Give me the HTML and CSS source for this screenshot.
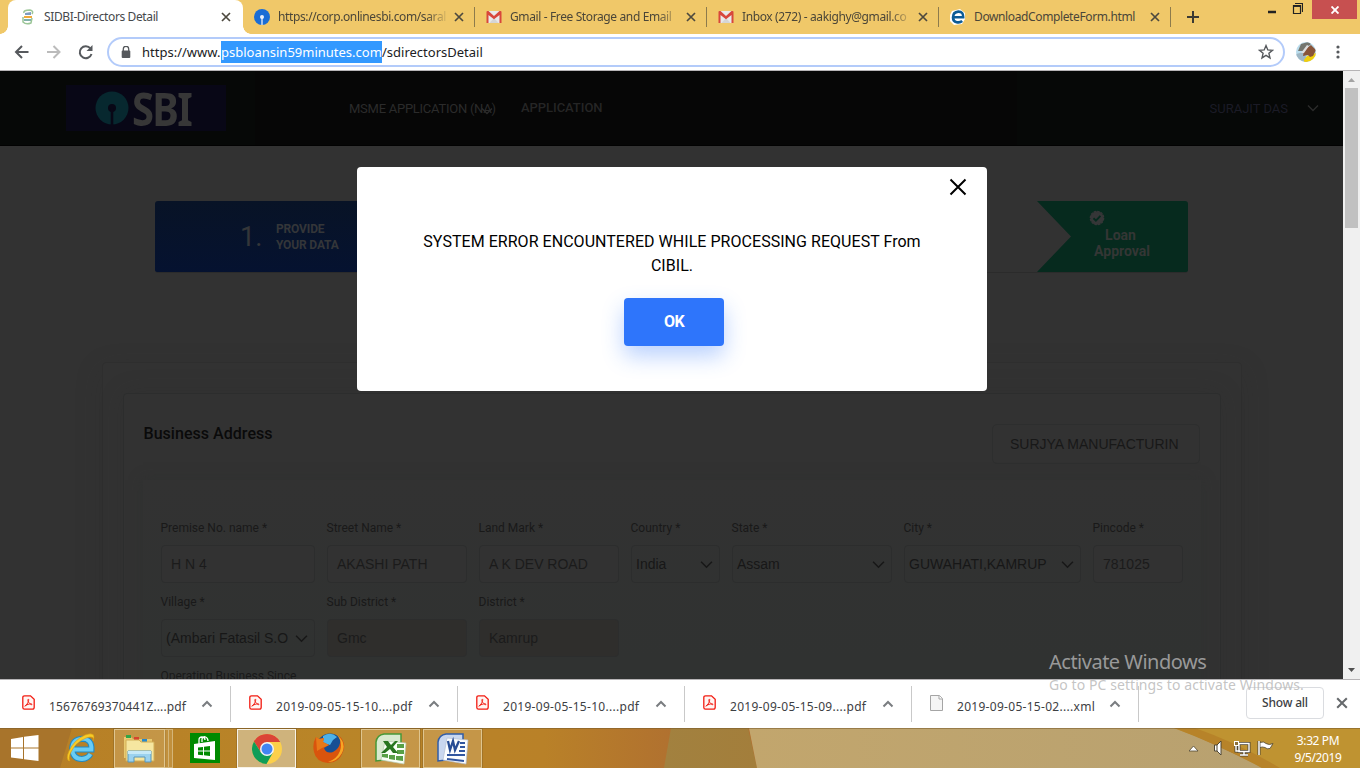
FILE: index.html
```html
<!DOCTYPE html>
<html lang="en">
<head>
<meta charset="utf-8">
<title>SIDBI-Directors Detail</title>
<link rel="stylesheet" href="styles.css">
</head>
<body>
<svg class="defs" width="0" height="0">
  <defs>
    <symbol id="close" viewBox="0 0 10 10"><path d="M1 1l8 8M9 1l-8 8" fill="none" stroke="currentColor" stroke-width="1.7"/></symbol>
    <symbol id="up" viewBox="0 0 12 8"><path d="M1.5 6.5L6 2l4.500 4.500" fill="none" stroke="#7a7d80" stroke-width="2"/></symbol>
    <symbol id="down" viewBox="0 0 12 8"><path d="M1 1.500l5 5 5-5" fill="none" stroke="currentColor" stroke-width="1.400"/></symbol>
    <symbol id="gmail" viewBox="0 0 15 12"><path d="M1 0h13v12H1z" fill="#e9e9e9"/><path d="M3 12l4.500-5 4.500 5z" fill="#d5d5d5"/><path d="M0 1Q0 0 1 0h1l5.500 5L13 0h1q1 0 1 1v11h-2V4l-5.500 4.200L2 4v8H0z" fill="#d8473b"/></symbol>
    <symbol id="pdf" viewBox="0 0 13 15"><path d="M2.500 .8h6l3.700 3.500v8q0 1.900-1.800 1.900H2.500Q.8 14.200 .8 12.500v-10Q.8 .8 2.500 .8z" fill="#fff5f3" stroke="#f21c12" stroke-width="1.300"/><path d="M3 11.300c-1.200-.8 6.800-3.600 7-1.900.1 1.500-5-2.400-4-4.900 1.200-1.800 1.200 3.200-3 6.800z" fill="none" stroke="#f21c12"/></symbol>
  </defs>
</svg>
<div class="screen">
  <div class="tabstrip">
    <div class="tab active">
      <svg class="fav" width="16" height="16" viewBox="0 0 16 16"><path d="M4 4Q3 1 10 1q4 1 2 4M3 8v5q3 3 8 1l1-5" fill="none" stroke="#9bc596" stroke-width="1.500"/><path d="M5 4l6-1v3H5z" fill="#7f9dc0"/><path d="M4 7h8v2H4z" fill="#f0a93a"/><path d="M4 10h7v2H4z" fill="#80b0a8"/></svg>
      <span class="tab-title">SIDBI-Directors Detail</span><svg class="x" width="10" height="10"><use href="#close"/></svg>
    </div>
    <div class="tab sep">
      <svg class="fav" width="16" height="16" viewBox="0 0 16 16"><circle cx="8" cy="8" r="8" fill="#1a6dd5"/><circle cx="8" cy="8" r="2" fill="#e8f0fb"/><path d="M8 8v8" stroke="#e8f0fb" stroke-width="1.300"/></svg>
      <span class="tab-title fade">https://corp.onlinesbi.com/saral</span><svg class="x" width="10" height="10"><use href="#close"/></svg>
    </div>
    <div class="tab sep">
      <svg class="fav" width="16" height="12"><use href="#gmail"/></svg>
      <span class="tab-title fade">Gmail - Free Storage and Email</span><svg class="x" width="10" height="10"><use href="#close"/></svg>
    </div>
    <div class="tab sep">
      <svg class="fav" width="16" height="12"><use href="#gmail"/></svg>
      <span class="tab-title fade">Inbox (272) - aakighy@gmail.co</span><svg class="x" width="10" height="10"><use href="#close"/></svg>
    </div>
    <div class="tab sep">
      <svg class="fav" width="16" height="16" viewBox="0 0 16 16"><path d="M2 2l8-2 5 4v6l-3 5-8 1-4-4V6z" fill="#fff"/><path d="M3 8.300h10.200Q13.500 2.500 8.300 2.600 3 3 3 8.500c0 5.500 6.500 5.800 9.200 3.500" fill="none" stroke="#0c5b96" stroke-width="2.600"/></svg>
      <span class="tab-title">DownloadCompleteForm.html</span><svg class="x" width="10" height="10"><use href="#close"/></svg>
    </div>
    <svg class="plus" width="12" height="12" viewBox="0 0 12 12"><path d="M6 0v12M0 6h12" stroke="#3c3a33" stroke-width="2"/></svg>
    <div class="wincontrols">
      <svg width="36" height="19" viewBox="0 0 36 19"><path d="M1 12h8" stroke="#222" stroke-width="2.500"/><path d="M26.500 5.500h7v8h-7zM28 3.500h7.500V12" fill="none" stroke="#222" stroke-width="1.200"/><path d="M26 6.200h8" stroke="#222" stroke-width="1.500"/></svg>
      <div class="winclose"><svg width="8" height="8" viewBox="0 0 8 8"><path d="M.5 .5l7 7m0-7l-7 7" stroke="#fff" stroke-width="1.900"/></svg></div>
    </div>
  </div>

  <div class="toolbar">
    <svg class="nav" width="80" height="16" viewBox="0 0 80 16"><path d="M14.500 8H2m6-6L2 8l6 6" fill="none" stroke="#56595d" stroke-width="2"/><path d="M33 8h12.500m-6-6l6 6-6 6" fill="none" stroke="#bbb" stroke-width="2"/><path d="M76.500 4.500A6 6 0 1 0 77.500 10" fill="none" stroke="#56595d" stroke-width="2"/><path d="M78.500 1v6h-6z" fill="#56595d"/></svg>
    <div class="omnibox">
      <svg width="10" height="12" viewBox="0 0 10 12"><path d="M2.300 5V3a2.700 2.700 0 0 1 5.400 0v2" fill="none" stroke="#56595d" stroke-width="1.300"/><rect x=".7" y="4.500" width="8.600" height="7.500" rx="1" fill="#56595d"/></svg>
      <div class="url"><span class="u1">https://www.</span><span class="sel">psbloansin59minutes.com</span><span>/sdirectorsDetail</span></div>
      <svg class="star" width="16" height="16" viewBox="0 0 16 16"><path d="M8 1.600l1.800 4.300 4.700.4-3.600 3 1.100 4.600L8 11.400l-4 2.500 1.100-4.600-3.600-3 4.700-.4z" fill="none" stroke="#56595d" stroke-width="1.400"/></svg>
    </div>
    <svg class="avatar" width="20" height="20" viewBox="0 0 20 20"><clipPath id="face"><circle cx="10" cy="10" r="10"/></clipPath><g clip-path="url(#face)"><path d="M0 0h20v20H0z" fill="#b9dced"/><path d="M0 12l8-2 4 10H0z" fill="#9fb7c4"/><path d="M8 18l3-4 9-3v9H8z" fill="#f1cf0c"/><path d="M8 8l7-5 5 5-3 6-3 1-2-2-5 1z" fill="#885439"/><path d="M2 9l3-7 7-2 3 2-8 7z" fill="#74766f"/><path d="M5 11l6-8 2 1-5 7z" fill="#ddd"/></g></svg>
    <svg class="dots" width="4" height="14" viewBox="0 0 4 14"><g fill="#56595d"><circle cx="2" cy="2" r="1.600"/><circle cx="2" cy="7" r="1.600"/><circle cx="2" cy="12" r="1.600"/></g></svg>
  </div>

  <div class="viewport">
    <div class="page">
      <div class="site-header">
        <div class="logo">
          <svg width="34" height="34" viewBox="0 0 34 34"><circle cx="17" cy="17" r="16.500" fill="#07282f"/><circle cx="17" cy="17" r="4" fill="#080716"/><path d="M17 17v17" stroke="#080716" stroke-width="2.600"/></svg>
          <span class="logo-text">SBI</span>
        </div>
        <div class="menu"><span class="m1">MSME APPLICATION (NA)</span><svg class="menu-arrow" width="14" height="8"><use href="#down"/></svg></div>
        <div class="menu second">APPLICATION</div>
        <div class="user"><span>SURAJIT DAS</span><svg width="12" height="8"><use href="#down"/></svg></div>
      </div>

      <div class="steps">
        <div class="step-one"><span class="num">1.</span><span class="provide">PROVIDE<br>YOUR DATA</span></div>
        <div class="step-last">
          <svg width="16" height="16" viewBox="0 0 16 16"><circle cx="8" cy="8" r="6.700" fill="#353637" stroke="#353637" stroke-width="1.300" stroke-dasharray="2.500 1"/><path d="M4.500 8.300l2.400 2.300 4.500-4.800" fill="none" stroke="#062a1e" stroke-width="1.900"/></svg>
          <span>Loan</span><span>Approval</span>
        </div>
      </div>

      <div class="outer">
        <div class="inner">
          <div class="inner-head"><h2>Business Address</h2><div class="company">SURJYA MANUFACTURIN</div></div>
          <div class="form">
            <div class="row">
              <div class="field"><label>Premise No. name *</label><div class="box">H N 4</div></div>
              <div class="field"><label>Street Name *</label><div class="box">AKASHI PATH</div></div>
              <div class="field"><label>Land Mark *</label><div class="box">A K DEV ROAD</div></div>
              <div class="field"><label>Country *</label><div class="box select"><span>India</span><svg width="13" height="9"><use href="#down"/></svg></div></div>
              <div class="field"><label>State *</label><div class="box select"><span>Assam</span><svg width="13" height="9"><use href="#down"/></svg></div></div>
              <div class="field"><label>City *</label><div class="box select"><span>GUWAHATI,KAMRUP</span><svg width="13" height="9"><use href="#down"/></svg></div></div>
              <div class="field"><label>Pincode *</label><div class="box">781025</div></div>
            </div>
            <div class="row">
              <div class="field"><label>Village *</label><div class="box select"><span>(Ambari Fatasil S.O</span><svg width="13" height="9"><use href="#down"/></svg></div></div>
              <div class="field"><label>Sub District *</label><div class="box off">Gmc</div></div>
              <div class="field"><label>District *</label><div class="box off">Kamrup</div></div>
            </div>
            <div class="row"><label class="since">Operating Business Since</label></div>
          </div>
        </div>
      </div>
    </div>
    <div class="scrollbar">
      <svg width="7" height="4" viewBox="0 0 7 4"><path d="M0 4l3.500-4L7 4z" fill="#a3a3a3"/></svg>
      <div class="thumb"></div>
      <svg class="sb-down" width="7" height="4" viewBox="0 0 7 4"><path d="M0 0h7L3.500 4z" fill="#505050"/></svg>
    </div>
    <div class="modal">
      <svg class="modal-x" width="18" height="18" viewBox="0 0 18 18"><path d="M1.500 1.500l15 15m0-15l-15 15" stroke="#000" stroke-width="2"/></svg>
      <p>SYSTEM ERROR ENCOUNTERED WHILE PROCESSING REQUEST From<br>CIBIL.</p>
      <div class="ok">OK</div>
    </div>
  </div>

  <div class="downloads">
    <div class="dl"><svg width="13" height="15"><use href="#pdf"/></svg><span>15676769370441Z....pdf</span><svg class="up" width="12" height="8"><use href="#up"/></svg></div>
    <div class="dl"><svg width="13" height="15"><use href="#pdf"/></svg><span class="wide">2019-09-05-15-10....pdf</span><svg class="up" width="12" height="8"><use href="#up"/></svg></div>
    <div class="dl"><svg width="13" height="15"><use href="#pdf"/></svg><span class="wide">2019-09-05-15-10....pdf</span><svg class="up" width="12" height="8"><use href="#up"/></svg></div>
    <div class="dl"><svg width="13" height="15"><use href="#pdf"/></svg><span class="wide">2019-09-05-15-09....pdf</span><svg class="up" width="12" height="8"><use href="#up"/></svg></div>
    <div class="dl"><svg width="13" height="16" viewBox="0 0 13 16"><path d="M.5 .5h9l3 3v12H.5z" fill="#f5f5f5" stroke="#a5a5a5"/><path d="M9 .5V4h3.500" fill="#fff" stroke="#a5a5a5"/></svg><span class="wide">2019-09-05-15-02....xml</span><svg class="up" width="12" height="8"><use href="#up"/></svg></div>
    <div class="showall">Show all</div>
    <svg class="dlx" width="12" height="12"><use href="#close"/></svg>
  </div>

  <div class="taskbar">
    <svg class="wallpaper" width="1360" height="40" viewBox="0 0 1360 40"><defs><linearGradient id="w1"><stop offset="0" stop-color="#b77f26"/><stop offset=".25" stop-color="#b98528"/><stop offset=".4" stop-color="#b98128"/><stop offset=".5" stop-color="#b07030"/></linearGradient><linearGradient id="w2"><stop offset="0" stop-color="#a2813f"/><stop offset="1" stop-color="#a37e3b"/></linearGradient><linearGradient id="w3"><stop offset="0" stop-color="#c2a66d"/><stop offset="1" stop-color="#b8a170"/></linearGradient></defs><path d="M0 0h1360v40H0z" fill="url(#w1)"/><path d="M0 0h72L60 40H0z" fill="#a8742b"/><path d="M671 0h77l9 40h-93z" fill="url(#w2)"/><path d="M749 0h430l86 40H757z" fill="url(#w3)"/><path d="M1174 0h186v40h-98q-38-22-88-40z" fill="#bf9331"/><path d="M1174 0q45 17 88 40h18q-42-25-85-40z" fill="#b78329"/><path d="M0 .5h1360" stroke="#7a5c2c" opacity=".55"/></svg>
    <div class="apps">
      <svg class="start" width="28" height="26" viewBox="0 0 28 26"><path d="M0 4l12-2v10.500H0zM13 1.800L27.500 0v12.500H13zM0 13.500h12V24L0 22.500zM13 13.500h14.500V26L13 24.200z" fill="#fff"/></svg>
      <svg class="ie" width="32" height="32" viewBox="0 0 32 32"><path d="M9 17.500h17.500Q27 7 17 6.700 7 7.500 7.200 17.500 8 27 17 27q6-.5 8.500-5" fill="none" stroke="#2189c4" stroke-width="6"/><path d="M9 17.500h17.500Q27 7 17 6.700 7 7.500 7.200 17.500 8 27 17 27q6-.5 8.500-5" fill="none" stroke="#69ccf4" stroke-width="3.800"/><path d="M5 29q-5-1-1-10Q9 8 20 3q12-4 8 6 2-6-7-3Q11 10 6 20q-3 6-1 9z" fill="#f8cc27" stroke="#d79a10" stroke-width=".6"/></svg>
      <div class="task explorer"><svg width="34" height="32" viewBox="0 0 34 32"><path d="M1 4h7l2 2h19v19H1z" fill="#e9ca71"/><path d="M3 2h5v3H3z" fill="#32a546"/><path d="M11 4h5v3h-5z" fill="#d6432d"/><path d="M19 6h5v3h-5z" fill="#2489ce"/><path d="M3 7h13l2 2h13v19H3z" fill="#f6e6a0" stroke="#d2ae56"/><path d="M5 29V18h23v11h-6v-5H11v5z" fill="#9bd2ef" stroke="#5897b9"/><path d="M5 18h23v3H5z" fill="#c6e9f7"/></svg></div>
      <div class="stack"></div><div class="stack"></div>
      <svg class="store" width="30" height="30" viewBox="0 0 30 30"><path d="M0 0h30v30H0z" fill="#008a00"/><path d="M4 11l21-3v19L4 25z" fill="#fff"/><path d="M9 11V7q0-3 3-3t3 3M12 9V6q1-3 3.500-2T18 8" fill="none" stroke="#fff" stroke-width="1.300"/><path d="M8 14.500l5-.6v3.600H8zM14 13.800l6-.8v4.500h-6zM8 18.500h5v3.800l-5-.5zM14 18.500h6V23l-6-.7z" fill="#008a00"/></svg>
      <div class="task chrome"><svg width="30" height="30" viewBox="0 0 30 30"><circle cx="15" cy="15" r="15" fill="#fcd04b"/><path d="M15 15L2 7.500A15 15 0 0 1 28 8H15z" fill="#db4437"/><path d="M15 8h13A15 15 0 0 0 2 7.500l7 11z" fill="#db4437"/><path d="M2 7.500A15 15 0 0 0 14.500 30L21 18.500 9 18.500z" fill="#0f9d58"/><circle cx="15" cy="15" r="7" fill="#f4f4f4"/><circle cx="15" cy="15" r="5.500" fill="#4285f4"/></svg></div>
      <svg class="firefox" width="32" height="32" viewBox="0 0 32 32"><circle cx="17" cy="15" r="13.500" fill="#174f94"/><path d="M10 4q8-5 14 1l-4 3-3 5-7-2z" fill="#4eb2e8"/><path d="M3 5l3 2 5-1-1 4 6 3-5 3q2 6 9 4 6-3 7-9 1-5-2-8 9 7 5 17-4 11-15 11Q3 30 1 20-1 12 3 5z" fill="#d9540d"/><path d="M24 3q10 8 5 18-5 9-14 9 9-3 12-11 3-9-3-16z" fill="#f7a624"/><path d="M3 5l3 2 5-1-1 4 6 3-7 3-5 3z" fill="#e87918"/></svg>
      <div class="task excel"><svg width="32" height="32" viewBox="0 0 32 32"><path d="M1 28V9Q2 2 9 1h17v24z" fill="#d8ead0" stroke="#479837" stroke-width="1.500"/><path d="M10 8l21 2-2 21-23-4z" fill="#f9fff7" stroke="#b8cab0" stroke-width=".7"/><path d="M22 11h7v4h-7zm0 6h7v4h-7zm-1 6h7v5l-7-1zM14 22h6v5l-6-1zM7 21h6v4l-6-1z" fill="#58a046"/><path d="M8 8h5l3 4 4-4h3l-5 6 5 6h-5l-3-4-5 4H6l6-6z" fill="#287520"/></svg></div>
      <div class="task word"><svg width="32" height="32" viewBox="0 0 32 32"><path d="M1 28V9Q2 2 9 1h17v24z" fill="#c9d7ef" stroke="#315da7" stroke-width="1.500"/><path d="M10 5l21 2-2 24-23-4z" fill="#fbfdff" stroke="#b5bfd0" stroke-width=".7"/><path d="M23 10h5m-5 4h5m-6 4h6M10 22h18M10 26l17 2" stroke="#3156a0" stroke-width="2"/><path d="M11 8l2 9 3-9 2 9 4-9" fill="none" stroke="#284d95" stroke-width="2.300"/></svg></div>
    </div>
    <div class="tray">
      <svg width="86" height="18" viewBox="0 0 86 18"><path d="M0 12l4.500-5L9 12z" fill="#fff" stroke="#4e4634" stroke-width=".8"/><path d="M25.500 6H28l4-4v14l-4-4h-2.500z" fill="#fff" stroke="#4e4634"/><path d="M28 6v6" stroke="#4e4634"/><path d="M50 4.500h10v8H50zM55 12.500V16m-4 0h8M47 6v6h4" fill="none" stroke="#4e4634" stroke-width="3"/><path d="M50 4.500h10v8H50zM55 12.500V16m-4 0h8M47 6v6h4" fill="none" stroke="#fff" stroke-width="1.400"/><rect x="45.500" y="2.500" width="4" height="4" fill="#8d7037" stroke="#fff"/><path d="M70 2v14" stroke="#4e4634" stroke-width="3"/><path d="M71 3.500q4-1.500 6 1 3 2 7 0l-3 5q-3 1-5-1-3-1-5 0z" fill="#fff" stroke="#4e4634" stroke-width=".8"/><path d="M70 2v14" stroke="#fff" stroke-width="1.500"/></svg>
      <div class="clock"><span>3:32 PM</span><span>9/5/2019</span></div>
    </div>
  </div>
  <div class="watermark"><div class="wm1">Activate Windows</div><div class="wm2">Go to PC settings to activate Windows.</div></div>
</div>
</body>
</html>
```
FILE: styles.css
```css
* { box-sizing: border-box; }
body { margin: 0; overflow: hidden; }
svg { display: block; flex: none; }
.defs { position: absolute; }
.screen { position: relative; width: 1360px; height: 768px; display: flex; flex-direction: column; overflow: hidden; font-family: "Noto Sans", "Open Sans", sans-serif; font-size: 12px; color: #3d4043; white-space: nowrap; }

.tabstrip { height: 34px; background: #f0c869; display: flex; padding-left: 8px; flex: none; }
.tab { width: 232px; height: 34px; display: flex; align-items: center; padding: 0 11px 0 11px; position: relative; }
.tab.active { width: 235px; background: #fff; border-radius: 8px 8px 0 0; padding-left: 12px; padding-right: 12px; }
.tab.active::before, .tab.active::after { content: ""; position: absolute; bottom: 0; width: 8px; height: 8px; }
.tab.active::before { left: -8px; background: radial-gradient(circle at 0 0, transparent 7.500px, #fff 8px); }
.tab.active::after { right: -8px; background: radial-gradient(circle at 100% 0, transparent 7.500px, #fff 8px); }
.tab.sep::after { content: ""; position: absolute; right: 0; top: 7px; width: 1px; height: 20px; background: #8d7b4c; }
.fav { margin-right: 8px; }
.tab-title { width: 170px; color: #4b4638; line-height: 20px; flex: none; letter-spacing: -.38px; }
.active .tab-title { width: 176px; color: #45484b; }
.fade { width: 168px; -webkit-mask-image: linear-gradient(90deg, #000 88%, transparent 102%); mask-image: linear-gradient(90deg, #000 88%, transparent 102%); }
.x { margin-left: auto; color: #4d493f; }
.plus { margin: 11px 0 0 16px; }
.wincontrols { margin-left: auto; display: flex; padding-right: 3px; }
.wincontrols > svg { margin-right: 9px; }
.winclose { width: 45px; height: 19px; background: #c75050; display: flex; align-items: center; justify-content: center; }

.toolbar { height: 37px; flex: none; background: #fff; border-bottom: 1px solid #b6b4b6; display: flex; align-items: center; padding: 0 20px 0 14px; }
.nav { margin-right: 13px; }
.omnibox { width: 1178px; height: 30px; border: 2px solid #b3cbfa; border-radius: 15px; display: flex; align-items: center; padding: 0 9px 0 12px; font-size: 13px; }
.url { display: flex; margin-left: 11px; line-height: 22px; color: #202124; }
.u1 { width: 79px; }
.sel { background: #3399ff; color: #fff; width: 161px; }
.star { margin-left: auto; }
.avatar { margin-left: 11px; }
.dots { margin-left: auto; }

.viewport { height: 608px; flex: none; display: flex; position: relative; overflow: hidden; font-family: Roboto, sans-serif; }
.page { width: 1343px; height: 608px; overflow: hidden; background: #323232; flex: none; }
.site-header { height: 75px; background: linear-gradient(90deg, #060807 0 255px, #060606 255px 1017px, #060807 1017px); display: flex; align-items: center; padding: 0 25px 0 66px; border-bottom: 1px solid #020202; font-size: 13px; color: #272727; }
.logo { width: 160px; height: 46px; background: #080716; display: flex; align-items: center; padding-left: 29px; }
.logo-text { font: 700 47px/46px "Noto Sans", sans-serif; color: #373737; margin-left: 3px; letter-spacing: -2px; transform: scaleX(.85); transform-origin: 0 50%; }
.menu { margin-left: 123px; display: flex; width: 146px; align-items: center; position: relative; color: #2b2b2b; }
.m1 { letter-spacing: -.26px; }
.menu.second { margin-left: 26px; width: 100px; font-weight: 500; padding-bottom: 2px; color: #252525; letter-spacing: -.05px; }
.menu-arrow { position: absolute; right: 1px; top: 6px; }
.user { margin-left: auto; display: flex; align-items: center; color: #1b1b26; }
.user svg { margin-left: 19px; margin-right: -1px; color: #2b2b2b; }
.steps { margin: 55px 155px 0; width: 1033px; height: 72px; display: flex; justify-content: space-between; border-radius: 3px; overflow: hidden; border-bottom: 1px solid #2b2b2b; }
.step-one { width: 260px; background: linear-gradient(#081326, #051230); display: flex; align-items: center; padding-left: 85px; color: #343639; }
.num { font-size: 27px; width: 36px; }
.provide { font-weight: 700; font-size: 12px; line-height: 16px; letter-spacing: -.15px; }
.step-last { width: 151px; background: #062a1e; clip-path: polygon(0 0, 100% 0, 100% 100%, 0 100%, 34px 50%); color: #343635; font: 700 14px/16px Roboto, sans-serif; display: flex; flex-direction: column; align-items: center; padding: 9px 0 0 19px; }
.step-last svg { margin-right: 51px; }
.step-last span:nth-of-type(1) { margin: 1px 3px 0 0; }
.outer { margin: 89px 0 0 102px; width: 1140px; height: 400px; border: 1px solid #2e2e2e; border-radius: 4px; padding: 30px 20px; box-shadow: 0 8px 28px #2e2e2e33; }
.inner { width: 1098px; height: 390px; border: 1px solid #2c2d2d; border-radius: 4px; padding: 0 19px; box-shadow: 0 0 24px #2d2d2d33; }
.inner-head { height: 86px; display: flex; justify-content: space-between; padding-top: 30px; }
h2 { font: 500 16px/20px Roboto, sans-serif; color: #0a0a0a; margin: 0 0 0 .5px; letter-spacing: .04px; }
.company { width: 208px; height: 40px; border: 1px solid #2d2e2e; border-radius: 5px; padding: 0 17px; margin-right: 1px; font: 14px/38px "Liberation Sans", sans-serif; color: #181818; }
.form { height: 300px; background: linear-gradient(#323232, #303231 60%); padding: 38px 18px 0; box-shadow: 0 0 12px #2d302f88; }
.row { display: grid; grid-template-columns: 154px 140px 140px 89px 160px 177px 90px; column-gap: 12px; height: 74px; }
.row label { display: block; font-size: 12px; line-height: 20px; height: 27px; color: #191919; }
.field label { margin-left: -.5px; }
.row .since { margin-left: -.5px; }
.box { height: 38px; border: 1px solid #2c2d2d; border-radius: 4px; padding: 0 9px; font: 14px/36px "Liberation Sans", sans-serif; color: #1b1b1b; background: #323232; }
.select { display: flex; align-items: center; padding: 0 6px 0 4px; background: transparent; color: #171717; }
.select svg { margin-left: auto; }
.off { background: #2f2e2c; }
.scrollbar { width: 17px; background: #f0f0f0; display: flex; flex-direction: column; align-items: center; padding: 7px 0; }
.thumb { width: 13px; height: 140px; background: #c1c1c1; margin-top: 6px; }
.sb-down { margin-top: auto; }
.modal { position: absolute; left: 357px; top: 96px; width: 630px; height: 224px; background: #fff; border-radius: 4px; display: flex; flex-direction: column; align-items: center; }
.modal-x { align-self: flex-end; margin: 11px 20px 0 0; }
.modal p { margin: 34px 0 0; font-size: 16px; line-height: 24px; letter-spacing: .04px; color: #000; text-align: center; }
.ok { width: 100px; height: 48px; margin: 20px 0 0 4px; background: #2e75fb; color: #fff; border-radius: 4px; font: 700 16px/48px Roboto, sans-serif; letter-spacing: -.5px; text-align: center; box-shadow: 0 10px 22px #2e75fb55; }

.downloads { height: 49px; flex: none; background: #fff; border-top: 1px solid #b6b4b6; display: flex; padding-left: 4px; }
.dl { width: 227px; height: 36px; margin-top: 6px; border-right: 1px solid #c9c9c9; display: flex; padding-left: 18px; flex: none; }
.dl > svg:first-child { margin-top: 9px; }
.dl span { margin: 11px 0 0 14px; width: 140px; line-height: 20px; letter-spacing: .1px; }
.dl .wide { letter-spacing: .29px; }
.dl .up { margin: 14px 0 0 12px; }
.showall { width: 78px; height: 32px; border: 1px solid #dadce0; border-radius: 4px; margin: 7px 0 0 107px; font-weight: 500; text-align: center; line-height: 30px; letter-spacing: -.2px; }
.dlx { margin: 17px 0 0 12px; color: #66696c; }

.taskbar { height: 40px; flex: none; display: flex; position: relative; }
.wallpaper { position: absolute; left: 0; top: 0; }
.apps, .tray { position: relative; display: flex; align-items: center; }
.apps { padding-left: 11px; }
.ie { margin-left: 26px; }
.task { height: 39px; margin-top: 1px; border: 1px solid #dfc58f; background: #d8b57966; outline: 1px solid #76572455; display: flex; align-items: center; justify-content: center; }
.explorer { width: 51px; margin-left: 17px; }
.stack { width: 4px; height: 39px; margin-top: 1px; border: 1px solid #d4b579; border-left: 0; background: #cfa55e66; }
.store { margin-left: 17px; }
.chrome { width: 59px; margin-left: 17px; background: #d7c49cbb; border-color: #f7f2e6; }
.firefox { margin-left: 17px; }
.excel { width: 59px; margin-left: 16px; }
.word { width: 59px; margin-left: 3px; }
.tray { margin-left: auto; padding-right: 18px; }
.clock { display: flex; flex-direction: column; text-align: center; color: #fff; line-height: 17px; letter-spacing: -.4px; margin-left: 19px; width: 48px; padding-top: 2px; }
.watermark { position: absolute; left: 1049px; top: 648px; }
.wm1 { font-size: 20px; line-height: 28px; color: #999; letter-spacing: -.5px; }
.wm2 { font-size: 14px; line-height: 18px; color: #bbbbbbdd; letter-spacing: .08px; }
```
